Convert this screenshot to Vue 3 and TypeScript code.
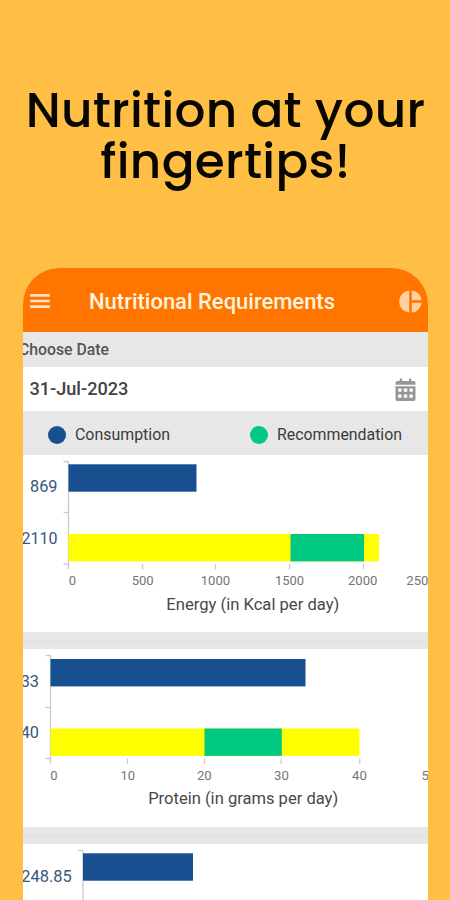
<script setup lang="ts">
interface Label {
  text: string
  x: number
  width: number
  anchor?: 'start' | 'middle' | 'end'
}

interface Bar {
  x: number
  y: number
  width: number
  color: string
}

interface Chart {
  height: number
  axisX: number
  top: number
  ticksY: number[]
  ticksX: number[]
  bars: Bar[]
  values: (Label & { y: number })[]
  scale: Label[]
  scaleY: number
  title?: Label & { y: number }
}

const blue = '#174f91'
const yellow = '#ffff00'
const green = '#02c982'

const legend = [
  { text: 'Consumption', color: blue, width: 95 },
  { text: 'Recommendation', color: green, width: 125 },
]

const charts: Chart[] = [
  {
    height: 177,
    axisX: 45.5,
    top: 6.5,
    ticksY: [6.5, 57.5, 109],
    ticksX: [119.5, 192.5, 266.5, 340.5],
    bars: [
      { x: 45.5, y: 9.3, width: 128, color: blue },
      { x: 45.5, y: 79, width: 310.5, color: yellow },
      { x: 267.5, y: 79, width: 73.5, color: green },
    ],
    values: [
      { text: '869', x: 34.5, y: 37.3, width: 27.5 },
      { text: '2110', x: 34.5, y: 88.8, width: 36 },
    ],
    scale: [
      { text: '0', x: 49.5, width: 7.3 },
      { text: '500', x: 119.7, width: 22 },
      { text: '1000', x: 192.5, width: 29.5 },
      { text: '1500', x: 266.5, width: 29 },
      { text: '2000', x: 339.7, width: 29.5 },
      { text: '2500', x: 383.3, width: 29.5, anchor: 'start' },
    ],
    scaleY: 130.3,
    title: { text: 'Energy (in Kcal per day)', x: 229.8, y: 155, width: 173 },
  },
  {
    height: 178,
    axisX: 27.5,
    top: 6.5,
    ticksY: [6.5, 58.5, 109.5],
    ticksX: [104.5, 181.5, 258.2, 336.8],
    bars: [
      { x: 27.5, y: 10, width: 255, color: blue },
      { x: 27.5, y: 79.5, width: 309, color: yellow },
      { x: 181.5, y: 79.5, width: 77.3, color: green },
    ],
    values: [
      { text: '33', x: 16, y: 38, width: 18.3 },
      { text: '40', x: 16, y: 89.3, width: 18.3 },
    ],
    scale: [
      { text: '0', x: 31, width: 7.3 },
      { text: '10', x: 104.7, width: 14.6 },
      { text: '20', x: 181.3, width: 14.8 },
      { text: '30', x: 258.5, width: 14.8 },
      { text: '40', x: 336.5, width: 14.8 },
      { text: '50', x: 398.5, width: 14.8, anchor: 'start' },
    ],
    scaleY: 131,
    title: { text: 'Protein (in grams per day)', x: 220.2, y: 155.2, width: 190 },
  },
  {
    height: 178,
    axisX: 60,
    top: 6.5,
    ticksY: [6.5, 58.5, 109.5],
    ticksX: [],
    bars: [{ x: 60, y: 9.3, width: 110, color: blue }],
    values: [{ text: '248.85', x: 48.8, y: 37.7, width: 50.5 }],
    scale: [],
    scaleY: 131,
  },
]
</script>

<template>
  <main class="promo">
    <h1 class="headline">
      <span class="line first">Nutrition at your</span>
      <span class="line second">fingertips!</span>
    </h1>

    <section class="phone">
      <header class="appbar">
        <svg class="menu" width="20" height="16" viewBox="0 0 20 16">
          <path d="M0 2.3H20M0 8H20M0 13.7H20" stroke="#ffe2bd" stroke-width="2.7" />
        </svg>
        <svg class="title" width="248" height="32">
          <text x="0" y="21" textLength="246" lengthAdjust="spacingAndGlyphs">Nutritional Requirements</text>
        </svg>
        <svg class="pie" width="23" height="23" viewBox="0 0 23 23">
          <path
            fill="#ffd0a0"
            d="M10.2.4V22.6A11.15 11.15 0 0 1 10.2.4ZM12.8.4A11.2 11.2 0 0 1 22.6 10.2H12.8ZM12.8 12.8H22.6A11.2 11.2 0 0 1 12.8 22.6Z"
          />
        </svg>
      </header>

      <div class="choose">
        <svg width="100" height="24">
          <text x="-4" y="17" textLength="90" lengthAdjust="spacingAndGlyphs">Choose Date</text>
        </svg>
      </div>

      <div class="date">
        <svg width="110" height="28">
          <text x="6.4" y="20" textLength="99" lengthAdjust="spacingAndGlyphs">31-Jul-2023</text>
        </svg>
        <svg class="calendar" width="21" height="24" viewBox="0 0 21 24">
          <path
            fill="#969696"
            fill-rule="evenodd"
            d="M4.7 3V1.2Q4.7.6 5.3.6H6.5Q7.1.6 7.1 1.2V3H13.9V1.2Q13.9.6 14.5.6H15.7Q16.3.6 16.3 1.2V3H18.7Q20.5 3 20.5 4.8V6.8H.5V4.8Q.5 3 2.3 3ZM.5 8.2H20.5V21Q20.5 23 18.5 23H2.5Q.5 23 .5 21ZM3.2 10.6V13.7H6.5V10.6ZM8.8 10.6V13.7H12.2V10.6ZM14.5 10.6V13.7H17.8V10.6ZM3.2 16.6V19.8H6.5V16.6ZM8.8 16.6V19.8H12.2V16.6ZM14.5 16.6V19.8H17.8V16.6Z"
          />
        </svg>
      </div>

      <div class="legend">
        <div v-for="item in legend" :key="item.text" class="legend-item">
          <svg width="18" height="18"><circle cx="9" cy="9" r="9" :fill="item.color" /></svg>
          <svg :width="item.width + 2" height="24">
            <text x="0" y="17" :textLength="item.width" lengthAdjust="spacingAndGlyphs">{{ item.text }}</text>
          </svg>
        </div>
      </div>

      <div class="charts">
        <article v-for="(chart, i) in charts" :key="i" class="card">
          <svg class="chart" width="405" :height="chart.height">
            <g class="axis">
              <path :d="`M${chart.axisX} ${chart.top}V${chart.ticksY[2] + 5}`" />
              <path v-for="y in chart.ticksY" :key="y" :d="`M${chart.axisX - 5} ${y}H${chart.axisX}`" />
              <path v-for="x in chart.ticksX" :key="x" :d="`M${x} ${chart.ticksY[2]}V${chart.ticksY[2] + 5.5}`" />
            </g>
            <rect
              v-for="(bar, b) in chart.bars"
              :key="b"
              :x="bar.x"
              :y="bar.y"
              :width="bar.width"
              height="27.4"
              :fill="bar.color"
            />
            <text
              v-for="v in chart.values"
              :key="v.text"
              class="value"
              :x="v.x"
              :y="v.y"
              :textLength="v.width"
              lengthAdjust="spacingAndGlyphs"
            >{{ v.text }}</text>
            <text
              v-for="s in chart.scale"
              :key="s.text"
              class="scale"
              :x="s.x"
              :y="chart.scaleY"
              :text-anchor="s.anchor ?? 'middle'"
              :textLength="s.width"
              lengthAdjust="spacingAndGlyphs"
            >{{ s.text }}</text>
            <text
              v-if="chart.title"
              class="caption"
              :x="chart.title.x"
              :y="chart.title.y"
              :textLength="chart.title.width"
              lengthAdjust="spacingAndGlyphs"
            >{{ chart.title.text }}</text>
          </svg>
        </article>
      </div>
    </section>
  </main>
</template>

<style>
body {
  margin: 0;
  background: #ffbf44;
}
</style>

<style scoped>
.promo {
  box-sizing: border-box;
  width: 450px;
  height: 900px;
  overflow: hidden;
  background: #ffbf44;
  padding: 85px 22px 0 23px;
  font-family: Roboto, "Liberation Sans", sans-serif;
}

svg {
  display: block;
  flex: none;
}

.headline {
  height: 183px;
  margin: 0;
  display: flex;
  flex-direction: column;
  align-items: center;
  color: #080600;
  font-family: Poppins, Inter, sans-serif;
  font-feature-settings: "cv11" 1;
  font-weight: 500;
  font-size: 48.5px;
  line-height: 51px;
  letter-spacing: 0.3px;
  white-space: nowrap;
}

.phone {
  height: 632px;
  overflow: hidden;
  border-radius: 36px 36px 0 0;
  background: #e7e7e7;
}

.appbar {
  height: 64px;
  display: flex;
  align-items: center;
  background: #ff7500;
}

.menu {
  margin: 2px 39px 0 7px;
}

.title {
  margin-top: 8px;
  fill: #fff3dc;
  font-size: 22px;
  font-weight: 500;
}

.pie {
  margin: 2px 0 0 62px;
}

.choose {
  height: 35px;
  display: flex;
  align-items: center;
  background: #e7e7e7;
  fill: #555;
  font-size: 16px;
  font-weight: 500;
}

.date {
  height: 44px;
  display: flex;
  align-items: center;
  justify-content: space-between;
  padding-right: 12px;
  background: #fff;
  fill: #424242;
  font-size: 18px;
  font-weight: 500;
}

.calendar {
  margin-top: 1px;
}

.legend {
  height: 44px;
  box-sizing: border-box;
  display: flex;
  align-items: center;
  gap: 78px;
  padding: 3px 0 0 25px;
  fill: #3b3b3b;
  font-size: 16.5px;
}

.legend-item {
  display: flex;
  align-items: center;
  gap: 9px;
}

.charts {
  display: flex;
  flex-direction: column;
  gap: 17px;
  background: #e7e7e7;
}

.card {
  background: #fff;
  box-shadow: 0 9px 0 #e7e7e7, 0 10px 0 #dedede;
}

.axis {
  fill: none;
  stroke: #cacaca;
  stroke-width: 1.3;
}

.value {
  fill: #35587c;
  font-size: 16.5px;
  text-anchor: end;
}

.scale {
  fill: #757575;
  font-size: 13px;
}

.caption {
  fill: #484848;
  font-size: 16.5px;
  text-anchor: middle;
}
</style>
